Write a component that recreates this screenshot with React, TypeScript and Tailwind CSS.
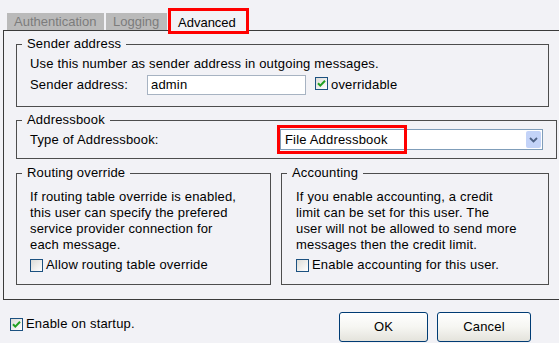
function CheckBox({ checked }: { checked?: boolean }) {
  return (
    <span className="inline-flex h-[13px] w-[13px] shrink-0 items-center justify-center border border-[#1c5180] bg-linear-to-br from-[#dcdcd7] to-white">
      {checked ? (
        <svg viewBox="0 0 11 11" className="h-[11px] w-[11px]" aria-hidden="true">
          <path d="M2 5.2 L4.3 7.6 L9 2.8" fill="none" stroke="#21a121" strokeWidth="2" />
        </svg>
      ) : null}
    </span>
  );
}

function Button({ label, width }: { label: string; width: string }) {
  return (
    <button
      type="button"
      className={`${width} h-[30px] rounded-[3px] border border-[#003c74] bg-linear-to-b from-white via-[#f6f6f2] to-[#e4e3dc] text-[13px] text-black`}
    >
      {label}
    </button>
  );
}

export default function App() {
  return (
    <div className="h-[343px] w-[559px] overflow-hidden bg-[#f2f2f6] font-['Liberation_Sans',Arial,sans-serif] text-[13px] leading-[16px] tracking-[0.18px] text-black">
      {/* tabs */}
      <div className="flex h-[30px] items-end pl-[7px] tracking-normal">
        <div className="h-[17px] w-[97px] bg-[#bababa] pl-[7px] leading-[18px] text-[#7c7c7c]">Authentication</div>
        <div className="ml-[2px] h-[17px] w-[61px] bg-[#bababa] pl-[7px] leading-[18px] text-[#7c7c7c]">Logging</div>
        <div className="relative z-10 mb-[-4px] ml-[1px] h-[26px] w-[81px] border-[3px] border-[#ff0000] bg-[#f2f2f6] pl-[7px] pt-[4px]">
          Advanced
        </div>
      </div>

      {/* panel */}
      <div className="ml-[3px] h-[270px] border-b border-l border-t border-[#3a3a3a] pt-[6px]">
        <fieldset className="ml-[12px] w-[533px] border border-[#4d4d4d]">
          <legend className="ml-[5px] px-[5px] leading-[14px]">Sender address</legend>
          <div className="px-[13px] pb-[11px] pt-[5px]">
            <div className="whitespace-nowrap">Use this number as sender address in outgoing messages.</div>
            <div className="mt-[3px] flex h-[20px] items-center">
              <span className="w-[117px]">Sender address:</span>
              <div className="flex h-[20px] w-[159px] items-center border border-[#a7b3c2] bg-white px-[3px]">admin</div>
              <span className="ml-[9px]">
                <CheckBox checked />
              </span>
              <span className="ml-[3px]">overridable</span>
            </div>
          </div>
        </fieldset>

        <fieldset className="ml-[12px] mt-[6px] w-[533px] border border-[#4d4d4d]">
          <legend className="ml-[5px] px-[5px] leading-[14px]">Addressbook</legend>
          <div className="flex h-[21px] items-center px-[13px] box-content pt-[2px] pb-[8px]">
            <span className="w-[250px]">Type of Addressbook:</span>
            <div className="relative flex h-[21px] w-[263px] items-center border border-[#7f9db9] bg-white pl-[4px]">
              <span>File Addressbook</span>
              <span className="ml-auto mr-[1px] flex h-[17px] w-[15px] items-center justify-center rounded-[2px] bg-[#c3d3f8]">
                <svg viewBox="0 0 9 6" className="h-[6px] w-[9px]" aria-hidden="true">
                  <path d="M1 1 L4.5 4.5 L8 1" fill="none" stroke="#4d6185" strokeWidth="1.8" />
                </svg>
              </span>
              <span className="absolute -left-[4px] -top-[5px] h-[29px] w-[130px] border-[3px] border-[#ff0000]" />
            </div>
          </div>
        </fieldset>

        <div className="ml-[12px] mt-[7px] flex gap-[10px]">
          <fieldset className="w-[255px] border border-[#4d4d4d]">
            <legend className="ml-[5px] px-[5px] leading-[14px]">Routing override</legend>
            <div className="pl-[13px] pb-[11px] pt-[9px]">
              <div className="whitespace-nowrap">
                If routing table override is enabled,
                <br />
                this user can specify the prefered
                <br />
                service provider connection for
                <br />
                each message.
              </div>
              <div className="mt-[4px] flex items-center">
                <CheckBox />
                <span className="ml-[3px]">Allow routing table override</span>
              </div>
            </div>
          </fieldset>
          <fieldset className="w-[268px] border border-[#4d4d4d]">
            <legend className="ml-[5px] px-[5px] leading-[14px]">Accounting</legend>
            <div className="pl-[14px] pb-[11px] pt-[9px]">
              <div className="whitespace-nowrap">
                If you enable accounting, a credit
                <br />
                limit can be set for this user. The
                <br />
                user will not be allowed to send more
                <br />
                messages then the credit limit.
              </div>
              <div className="mt-[4px] flex items-center">
                <CheckBox />
                <span className="ml-[3px]">Enable accounting for this user.</span>
              </div>
            </div>
          </fieldset>
        </div>
      </div>

      {/* footer */}
      <div className="flex items-start pl-[10px] pr-[28px] pt-[12px]">
        <div className="mt-[4px] flex items-center">
          <CheckBox checked />
          <span className="ml-[3px]">Enable on startup.</span>
        </div>
        <div className="ml-auto flex gap-[9px]">
          <Button label="OK" width="w-[89px]" />
          <Button label="Cancel" width="w-[94px]" />
        </div>
      </div>
    </div>
  );
}
